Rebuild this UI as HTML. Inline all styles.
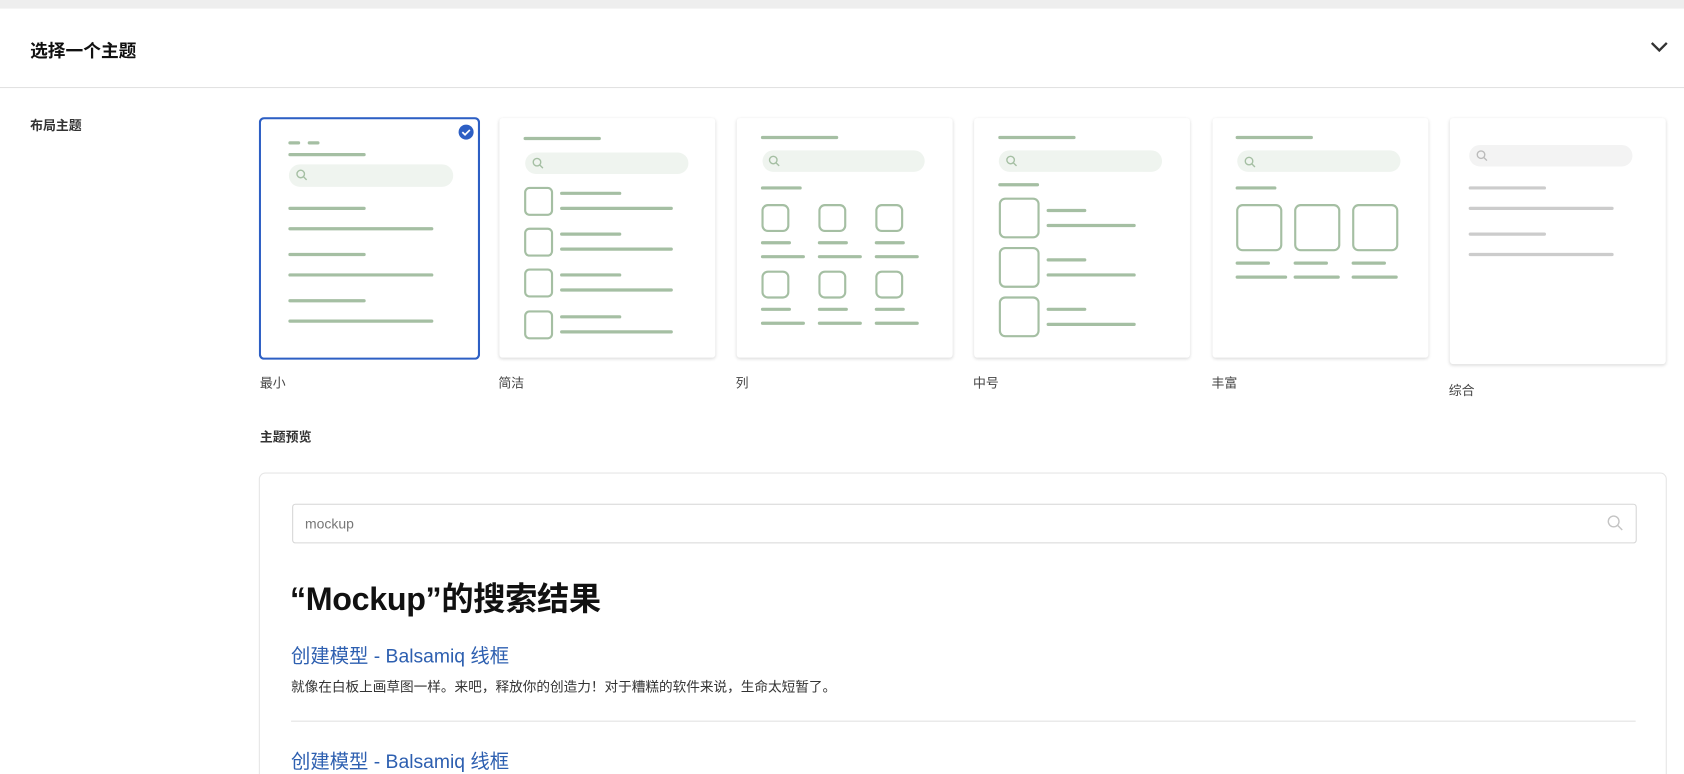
<!DOCTYPE html>
<html><head><meta charset="utf-8"><style>
html,body{margin:0;padding:0;width:1684px;height:774px;overflow:hidden;background:#fff;}
#w{position:absolute;left:0;top:0;width:1568px;height:721px;overflow:hidden;transform:scale(1.07398);transform-origin:0 0;font-family:"Liberation Sans","Noto Sans CJK SC",sans-serif;}
.a{position:absolute;}
.card{position:absolute;background:#fff;border-radius:3px;box-shadow:0 1px 3px rgba(0,0,0,.15);}
.card svg{position:absolute;left:0;top:0;}
.lbl{position:absolute;font-size:12px;color:#444;}
</style></head><body><div id="w">
<div class="a" style="left:0;top:0;width:1568px;height:8px;background:#eeeeee"></div>
<div class="a" style="left:0;top:81px;width:1568px;height:1px;background:#e2e2e2"></div>
<div class="a" style="left:28px;top:34px;font-size:16.5px;font-weight:bold;color:#111">选择一个主题</div>
<svg class="a" style="left:1536px;top:37px" width="18" height="14" viewBox="0 0 18 14"><path d="M2 3l7 7 7-7" fill="none" stroke="#333" stroke-width="2.2"/></svg>
<div class="a" style="left:28px;top:108px;font-size:12px;font-weight:bold;color:#333">布局主题</div>

<div class="card" style="left:241px;top:109px;width:206px;height:226px;box-shadow:none;">
<svg width="206" height="226" viewBox="-1 -1 206 226"><rect x="0" y="0" width="204" height="224" rx="4" fill="#fff" stroke="#2d5fc4" stroke-width="2"/>
<g stroke="#a5bfa3" stroke-width="3" stroke-linecap="round">
<path d="M28 23h8M46 23h8M28 34h69M28 84h69M28 103h132M28 127h69M28 146h132M28 170h69M28 189h132"/></g>
<rect x="27" y="43" width="153" height="21" rx="10.5" fill="#eff4ef"/>
<circle cx="38" cy="52" r="3.5" fill="none" stroke="#a5bfa3" stroke-width="1.3"/><path d="M40.5 54.5l3 3" stroke="#a5bfa3" stroke-width="1.3"/>
<circle cx="192" cy="13" r="7" fill="#2d5fc4"/><path d="M188.5 13l2.5 2.5 4.5-4.5" fill="none" stroke="#fff" stroke-width="1.6"/>
</svg></div>

<div class="card" style="left:465px;top:110px;width:201px;height:223px;">
<svg width="201" height="223"><g stroke="#a5bfa3" stroke-width="3" stroke-linecap="round" fill="none">
<path d="M24 19h69"/>
<rect x="24" y="65" width="25" height="25" rx="4" stroke-width="2"/><rect x="24" y="103" width="25" height="25" rx="4" stroke-width="2"/><rect x="24" y="141" width="25" height="25" rx="4" stroke-width="2"/><rect x="24" y="180" width="25" height="25" rx="4" stroke-width="2"/>
<path d="M58 70h54M58 84h102M58 108h54M58 122h102M58 146h54M58 160h102M58 185h54M58 199h102"/></g>
<rect x="24" y="32" width="152" height="20" rx="10" fill="#eff4ef"/>
<circle cx="35" cy="41" r="3.5" fill="none" stroke="#a5bfa3" stroke-width="1.3"/><path d="M37.5 43.5l3 3" stroke="#a5bfa3" stroke-width="1.3"/>
</svg></div>

<div class="card" style="left:686px;top:110px;width:201px;height:223px;">
<svg width="201" height="223"><g stroke="#a5bfa3" stroke-width="3" stroke-linecap="round" fill="none">
<path d="M24 18h69M24 65h35"/>
<rect x="24" y="81" width="24" height="24" rx="5" stroke-width="2"/><rect x="77" y="81" width="24" height="24" rx="5" stroke-width="2"/><rect x="130" y="81" width="24" height="24" rx="5" stroke-width="2"/>
<rect x="24" y="143" width="24" height="24" rx="5" stroke-width="2"/><rect x="77" y="143" width="24" height="24" rx="5" stroke-width="2"/><rect x="130" y="143" width="24" height="24" rx="5" stroke-width="2"/>
<path d="M24 116h25M77 116h25M130 116h25M24 129h38M77 129h38M130 129h38M24 178h25M77 178h25M130 178h25M24 191h38M77 191h38M130 191h38"/></g>
<rect x="24" y="30" width="151" height="20" rx="10" fill="#eff4ef"/>
<circle cx="34" cy="39" r="3.5" fill="none" stroke="#a5bfa3" stroke-width="1.3"/><path d="M36.5 41.5l3 3" stroke="#a5bfa3" stroke-width="1.3"/>
</svg></div>

<div class="card" style="left:907px;top:110px;width:201px;height:223px;">
<svg width="201" height="223"><g stroke="#a5bfa3" stroke-width="3" stroke-linecap="round" fill="none">
<path d="M24 18h69M24 62h35"/>
<rect x="24" y="75" width="36" height="36" rx="5" stroke-width="2"/><rect x="24" y="121" width="36" height="36" rx="5" stroke-width="2"/><rect x="24" y="167" width="36" height="36" rx="5" stroke-width="2"/>
<path d="M69 86h34M69 100h80M69 132h34M69 146h80M69 178h34M69 192h80"/></g>
<rect x="23" y="30" width="152" height="20" rx="10" fill="#eff4ef"/>
<circle cx="34" cy="39" r="3.5" fill="none" stroke="#a5bfa3" stroke-width="1.3"/><path d="M36.5 41.5l3 3" stroke="#a5bfa3" stroke-width="1.3"/>
</svg></div>

<div class="card" style="left:1129px;top:110px;width:201px;height:223px;">
<svg width="201" height="223"><g stroke="#a5bfa3" stroke-width="3" stroke-linecap="round" fill="none">
<path d="M23 18h69M23 65h35"/>
<rect x="23" y="81" width="41" height="42" rx="5" stroke-width="2"/><rect x="77" y="81" width="41" height="42" rx="5" stroke-width="2"/><rect x="131" y="81" width="41" height="42" rx="5" stroke-width="2"/>
<path d="M23 135h29M77 135h29M131 135h29M23 148h45M77 148h40M131 148h40"/></g>
<rect x="23" y="30" width="152" height="20" rx="10" fill="#eff4ef"/>
<circle cx="34" cy="40" r="3.5" fill="none" stroke="#a5bfa3" stroke-width="1.3"/><path d="M36.5 42.5l3 3" stroke="#a5bfa3" stroke-width="1.3"/>
</svg></div>

<div class="card" style="left:1350px;top:110px;width:201px;height:229px;">
<svg width="201" height="229"><g stroke="#cccccc" stroke-width="3" stroke-linecap="round" fill="none">
<path d="M19 65h69M19 84h132M19 108h69M19 127h132"/></g>
<rect x="18" y="25" width="152" height="20" rx="10" fill="#f3f3f3"/>
<circle cx="29" cy="34" r="3.5" fill="none" stroke="#bbb" stroke-width="1.3"/><path d="M31.5 36.5l3 3" stroke="#bbb" stroke-width="1.3"/>
</svg></div>

<div class="lbl" style="left:242px;top:348px">最小</div>
<div class="lbl" style="left:464px;top:348px">简洁</div>
<div class="lbl" style="left:685px;top:348px">列</div>
<div class="lbl" style="left:906px;top:348px">中号</div>
<div class="lbl" style="left:1128px;top:348px">丰富</div>
<div class="lbl" style="left:1349px;top:355px">综合</div>

<div class="a" style="left:242px;top:398px;font-size:12px;font-weight:bold;color:#333">主题预览</div>

<div class="a" style="left:241px;top:440px;width:1309px;height:500px;border:1px solid #e6e6e6;border-radius:6px;"></div>
<div class="a" style="left:272px;top:469px;width:1250px;height:35px;border:1px solid #d6d6d6;border-radius:3px;"></div>
<div class="a" style="left:284px;top:480px;font-size:13px;color:#777">mockup</div>
<svg class="a" style="left:1496px;top:479px" width="16" height="16" viewBox="0 0 16 16"><circle cx="6.5" cy="6.5" r="5" fill="none" stroke="#c4c4c4" stroke-width="1.3"/><path d="M10 10l4.5 4.5" stroke="#c4c4c4" stroke-width="1.3"/></svg>
<div class="a" style="left:270px;top:533px;font-size:30px;font-weight:bold;color:#111;letter-spacing:-0.3px">“Mockup”的搜索结果</div>
<div class="a" style="left:271px;top:597px;font-size:18px;color:#2d5fb0">创建模型 - Balsamiq 线框</div>
<div class="a" style="left:271px;top:629px;font-size:12.7px;color:#333">就像在白板上画草图一样。来吧，释放你的创造力！对于糟糕的软件来说，生命太短暂了。</div>
<div class="a" style="left:271px;top:671px;width:1252px;height:1px;background:#e2e2e2"></div>
<div class="a" style="left:271px;top:695px;font-size:18px;color:#2d5fb0">创建模型 - Balsamiq 线框</div>
</div></body></html>
